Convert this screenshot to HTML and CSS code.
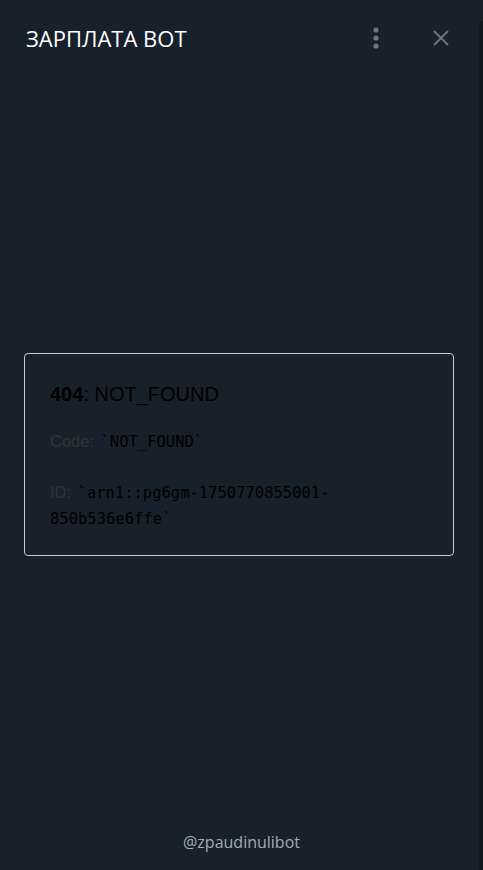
FILE: index.html
```html
<!DOCTYPE html>
<html lang="ru">
<head>
<meta charset="utf-8">
<title>ЗАРПЛАТА ВОТ</title>
<link rel="stylesheet" href="styles.css">
</head>
<body>
<div class="app">
  <header class="header">
    <h1 class="title">ЗАРПЛАТА ВОТ</h1>
    <div class="actions">
      <button class="icon-btn kebab" aria-label="Меню">
        <svg width="8" height="22" viewBox="0 0 8 22"><circle cx="4" cy="3" r="2.6" fill="#6b7681"/><circle cx="4" cy="11" r="2.6" fill="#6b7681"/><circle cx="4" cy="19" r="2.6" fill="#6b7681"/></svg>
      </button>
      <button class="icon-btn close" aria-label="Закрыть">
        <svg width="16" height="16" viewBox="0 0 16 16"><path d="M1.5 1.5 L14.5 14.5 M14.5 1.5 L1.5 14.5" stroke="#6b7681" stroke-width="1.8" stroke-linecap="round"/></svg>
      </button>
    </div>
  </header>
  <main class="content">
    <div class="card">
      <p class="err-title"><strong>404</strong>: NOT_FOUND</p>
      <p class="err-line"><span class="label">Code:</span> <code>`NOT_FOUND`</code></p>
      <p class="err-line"><span class="label">ID:</span> <code>`arn1::pg6gm-1750770855001-850b536e6ffe`</code></p>
    </div>
  </main>
  <footer class="footer">@zpaudinulibot</footer>
  <div class="edge"></div>
</div>
</body>
</html>
```
FILE: styles.css
```css
html, body {
  margin: 0;
  padding: 0;
  height: 100%;
  background: #17212b;
}
.app {
  position: relative;
  height: 870px;
  display: flex;
  flex-direction: column;
  background: #17212b;
  overflow: hidden;
}
.header {
  display: flex;
  align-items: center;
  justify-content: space-between;
  height: 75px;
  padding: 0 34px 0 26px;
  box-sizing: border-box;
}
.title {
  margin: 0;
  font-family: "Open Sans", "DejaVu Sans", sans-serif;
  font-weight: 500;
  font-size: 22px;
  color: #ffffff;
  letter-spacing: 0;
}
.actions {
  display: flex;
  align-items: center;
  gap: 53px;
}
.icon-btn {
  background: none;
  border: 0;
  padding: 0;
  display: flex;
  align-items: center;
  justify-content: center;
}
.content {
  flex: 1;
  padding: 278px 29px 0 24px;
}
.card {
  border: 1px solid #c8cbcf;
  border-radius: 4px;
  padding: 19px 25px 23px 25px;
  height: 203px;
  box-sizing: border-box;
  font-family: "Liberation Sans", Arial, sans-serif;
  color: #000;
}
.err-title {
  margin: 0 0 13px;
  font-size: 20px;
  line-height: 42px;
}
.err-title strong {
  font-weight: 700;
}
.err-line {
  margin: 0 0 24px;
  font-size: 16px;
  line-height: 26px;
  color: #2e3338;
}
.label {
  font-size: 16.5px;
  margin-right: 2px;
}
.err-line code {
  font-family: "DejaVu Sans Mono", monospace;
  font-size: 15.5px;
  color: #000;
}
.footer {
  height: 39px;
  text-align: center;
  font-family: "Open Sans", "DejaVu Sans", sans-serif;
  font-size: 16px;
  color: #a3acb5;
}
.edge {
  position: absolute;
  top: 21px;
  right: 0;
  width: 4px;
  bottom: 0;
  background: #101820;
}
```
